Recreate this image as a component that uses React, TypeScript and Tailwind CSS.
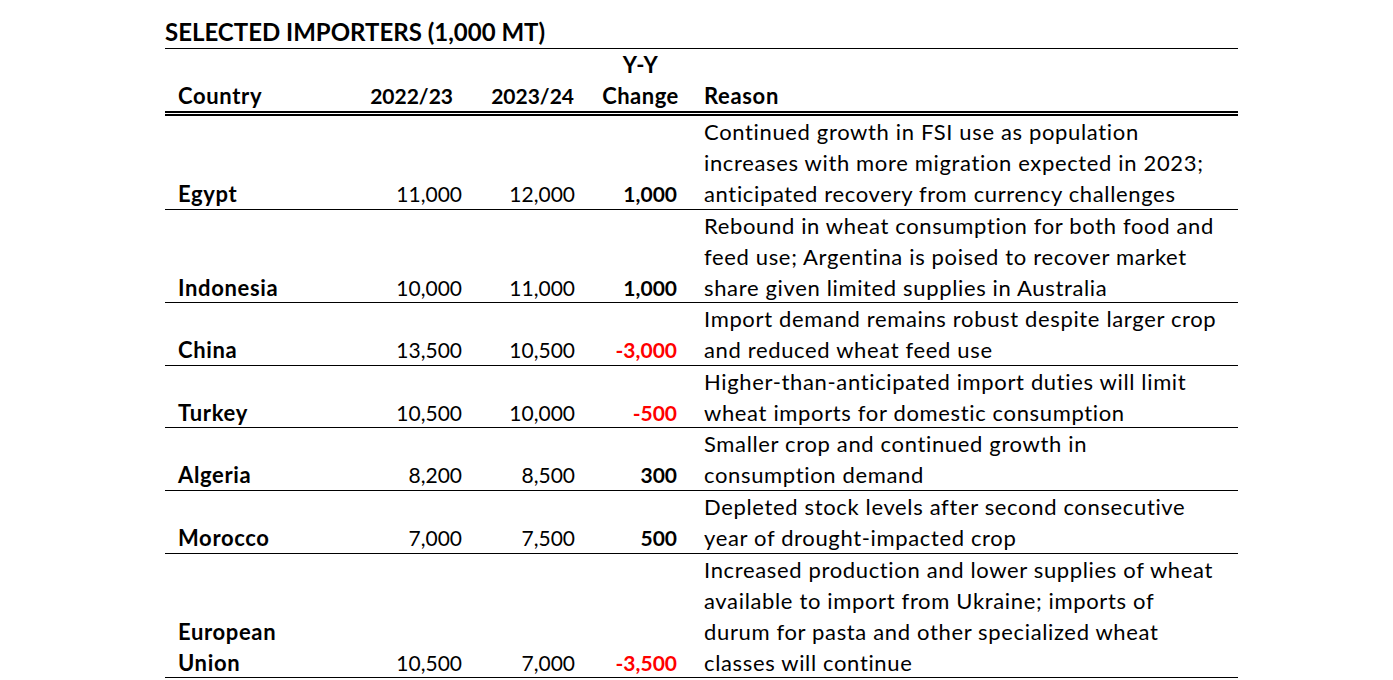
import React from 'react';

interface ImporterRow {
    country: string[];
    prev: string;
    next: string;
    change: string;
    reason: string[];
    height: string;
}

const rows: ImporterRow[] = [
    {
        country: ['Egypt'],
        prev: '11,000',
        next: '12,000',
        change: '1,000',
        reason: [
            'Continued growth in FSI use as population',
            'increases with more migration expected in 2023;',
            'anticipated recovery from currency challenges',
        ],
        height: 'h-[94px]',
    },
    {
        country: ['Indonesia'],
        prev: '10,000',
        next: '11,000',
        change: '1,000',
        reason: [
            'Rebound in wheat consumption for both food and',
            'feed use; Argentina is poised to recover market',
            'share given limited supplies in Australia',
        ],
        height: 'h-[93px]',
    },
    {
        country: ['China'],
        prev: '13,500',
        next: '10,500',
        change: '-3,000',
        reason: ['Import demand remains robust despite larger crop', 'and reduced wheat feed use'],
        height: 'h-[63px]',
    },
    {
        country: ['Turkey'],
        prev: '10,500',
        next: '10,000',
        change: '-500',
        reason: ['Higher-than-anticipated import duties will limit', 'wheat imports for domestic consumption'],
        height: 'h-[62px]',
    },
    {
        country: ['Algeria'],
        prev: '8,200',
        next: '8,500',
        change: '300',
        reason: ['Smaller crop and continued growth in', 'consumption demand'],
        height: 'h-[63px]',
    },
    {
        country: ['Morocco'],
        prev: '7,000',
        next: '7,500',
        change: '500',
        reason: ['Depleted stock levels after second consecutive', 'year of drought-impacted crop'],
        height: 'h-[63px]',
    },
    {
        country: ['European', 'Union'],
        prev: '10,500',
        next: '7,000',
        change: '-3,500',
        reason: [
            'Increased production and lower supplies of wheat',
            'available to import from Ukraine; imports of',
            'durum for pasta and other specialized wheat',
            'classes will continue',
        ],
        height: 'h-[124px]',
    },
];

const cell = 'flex flex-col justify-end';
// digits in Lato run wider than the sheet's font, so numbers get a smaller size
const num = 'text-[21px] tracking-normal';

function Lines({ lines }: { lines: string[] }) {
    return (
        <>
            {lines.map(line => (
                <span key={line} className="block whitespace-nowrap">
                    {line}
                </span>
            ))}
        </>
    );
}

export default function App() {
    return (
        <div className="min-h-[680px] w-full bg-white font-['Lato',sans-serif] text-black text-[22px] tracking-[0.65px] leading-[31px]">
            <div className="ml-[165px] w-[1073px]">
                {/* title */}
                <div className="h-[49px] border-b border-black pt-[16px] text-[24px] tracking-normal font-bold whitespace-nowrap">
                    SELECTED IMPORTERS (1,000 MT)
                </div>

                {/* header */}
                <div className="grid h-[67px] grid-cols-[190px_122px_112px_103px_1fr] border-b-[5px] border-double border-black font-bold">
                    <div className={`${cell} pl-[13px]`}>Country</div>
                    <div className={`${cell} ${num} items-end pr-[24px]`}>2022/23</div>
                    <div className={`${cell} ${num} items-end pr-[15px]`}>2023/24</div>
                    <div className={`${cell} items-center tracking-[0.5px]`}>
                        <span>Y-Y</span>
                        <span>Change</span>
                    </div>
                    <div className={`${cell} pl-[12px]`}>Reason</div>
                </div>

                {rows.map(row => (
                    <div
                        key={row.country.join(' ')}
                        className={`grid grid-cols-[190px_122px_112px_103px_1fr] border-b border-black ${row.height}`}
                    >
                        <div className={`${cell} pl-[13px] font-bold`}>
                            <Lines lines={row.country} />
                        </div>
                        <div className={`${cell} ${num} items-end pr-[15px]`}>{row.prev}</div>
                        <div className={`${cell} ${num} items-end pr-[14px]`}>{row.next}</div>
                        <div
                            className={`${cell} ${num} items-end pr-[15px] font-bold ${
                                row.change.startsWith('-') ? 'text-[#ff0000]' : ''
                            }`}
                        >
                            {row.change}
                        </div>
                        <div className={`${cell} pl-[12px]`}>
                            <Lines lines={row.reason} />
                        </div>
                    </div>
                ))}
            </div>
        </div>
    );
}
